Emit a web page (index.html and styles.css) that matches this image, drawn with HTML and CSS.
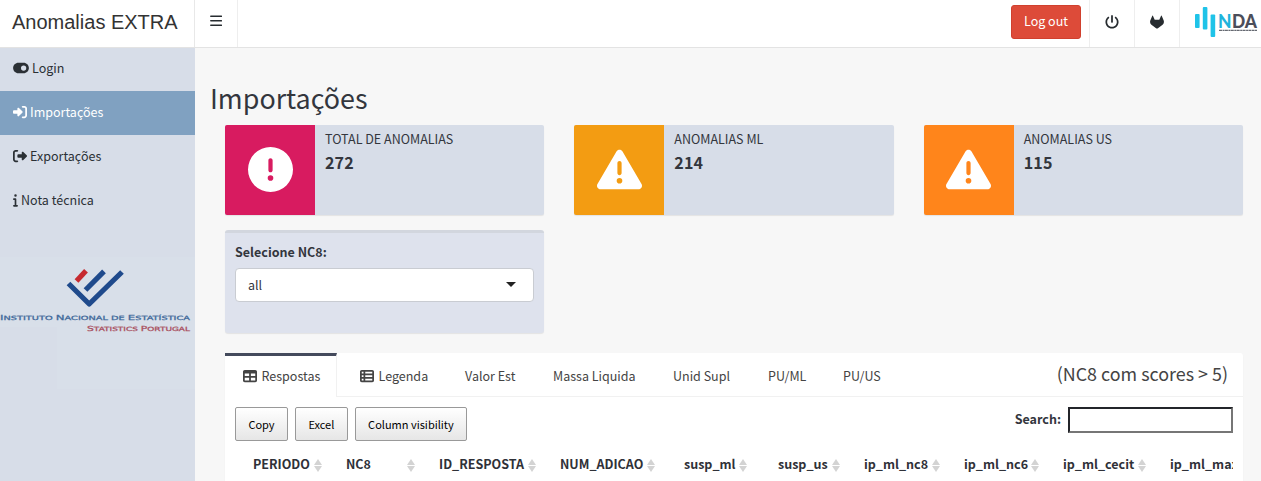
FILE: index.html
```html
<!DOCTYPE html>
<html lang="pt">
<head>
<meta charset="utf-8">
<title>Anomalias EXTRA</title>
<link rel="stylesheet" href="styles.css">
</head>
<body>
<header class="header">
  <div class="brand">Anomalias EXTRA</div>
  <a class="nav-btn menu"><svg width="12" height="12" viewBox="0 0 12 12"><path d="M.8 1.300h10.600M.8 5.800h10.600M.8 10.300h10.600" stroke="currentColor" stroke-width="1.500" stroke-linecap="round"/></svg></a>
  <div class="spacer"></div>
  <button class="logout">Log out</button>
  <a class="nav-btn power"><svg width="14" height="14" viewBox="0 0 512 512"><path fill="currentColor" d="M288 32c0-17.700-14.300-32-32-32s-32 14.300-32 32V256c0 17.700 14.300 32 32 32s32-14.300 32-32V32zM143.500 120.600c13.600-11.300 15.400-31.500 4.100-45.100s-31.500-15.400-45.100-4.100C49.700 115.400 16 181.800 16 256c0 132.500 107.500 240 240 240s240-107.500 240-240c0-74.200-33.800-140.600-86.600-184.600c-13.600-11.300-33.800-9.400-45.100 4.100s-9.400 33.800 4.100 45.100c38.900 32.300 63.500 81 63.500 135.400c0 97.200-78.800 176-176 176s-176-78.800-176-176c0-54.400 24.700-103.100 63.500-135.400z"/></svg></a>
  <a class="nav-btn gitlab"><svg width="14" height="14" viewBox="0 0 14 14"><path fill="currentColor" d="M2.300.7Q2.600.1 2.900.7L4.700 4.700h4.600L11.100.7Q11.400.1 11.700.7L13.700 5.600Q14.500 8 12.600 9.700L7.600 13.400Q7 13.800 6.400 13.400L1.400 9.700Q-.5 8 .3 5.600z"/></svg></a>
  <a class="nda"><svg width="66" height="34" viewBox="0 0 66 34">
    <g fill="#1fc3e8"><rect x="0" y="8" width="4.600" height="14" rx="1"/><rect x="7.800" y="1" width="4.600" height="22.500" rx="1"/><rect x="15.600" y="8.500" width="4.600" height="22.500" rx="1"/></g>
    <g font-family="Lato, sans-serif" font-weight="900" font-size="18"><text x="23" y="21.500" fill="#1fb4dc" textLength="13.500" lengthAdjust="spacingAndGlyphs">N</text><text x="37" y="21.500" fill="#4c4e5a" textLength="25" lengthAdjust="spacingAndGlyphs">DA</text></g>
    <path d="M24 24.300h38" stroke="#666a72" stroke-width="1.300" stroke-dasharray="3 .5 2 .4"/>
  </svg></a>
</header>
<div class="layout">
  <aside class="sidebar">
    <a class="item"><svg width="16" height="14" viewBox="0 0 576 512"><path fill="currentColor" d="M192 64C86 64 0 150 0 256S86 448 192 448H384c106 0 192-86 192-192s-86-192-192-192H192zm192 96a96 96 0 1 1 0 192 96 96 0 1 1 0-192z"/></svg><span>Login</span></a>
    <a class="item active"><svg width="14" height="14" viewBox="0 0 512 512"><path fill="currentColor" d="M217.900 105.900L340.700 228.700c7.200 7.200 11.300 17.100 11.300 27.300s-4.100 20.100-11.300 27.300L217.900 406.100c-6.400 6.400-15 9.900-24 9.900c-18.700 0-33.900-15.200-33.900-33.900l0-62.100L32 320c-17.700 0-32-14.300-32-32l0-64c0-17.700 14.300-32 32-32l128 0 0-62.100c0-18.700 15.200-33.900 33.900-33.900c9 0 17.600 3.600 24 9.900zM352 416l64 0c17.700 0 32-14.300 32-32l0-256c0-17.700-14.300-32-32-32l-64 0c-17.700 0-32-14.300-32-32s14.300-32 32-32l64 0c53 0 96 43 96 96l0 256c0 53-43 96-96 96l-64 0c-17.700 0-32-14.300-32-32s14.300-32 32-32z"/></svg><span>Importações</span></a>
    <a class="item"><svg width="14" height="14" viewBox="0 0 512 512"><path fill="currentColor" d="M377.900 105.900L500.700 228.700c7.200 7.200 11.300 17.100 11.300 27.300s-4.100 20.100-11.300 27.300L377.900 406.100c-6.400 6.400-15 9.900-24 9.900c-18.700 0-33.900-15.200-33.900-33.900l0-62.100-128 0c-17.700 0-32-14.300-32-32l0-64c0-17.700 14.300-32 32-32l128 0 0-62.100c0-18.700 15.200-33.900 33.900-33.900c9 0 17.600 3.600 24 9.900zM160 96L96 96c-17.700 0-32 14.300-32 32l0 256c0 17.700 14.300 32 32 32l64 0c17.700 0 32 14.300 32 32s-14.300 32-32 32l-64 0c-53 0-96-43-96-96L0 128C0 75 43 32 96 32l64 0c17.700 0 32 14.300 32 32s-14.300 32-32 32z"/></svg><span>Exportações</span></a>
    <a class="item"><svg width="5" height="14" viewBox="0 0 192 512"><path fill="currentColor" d="M48 80a48 48 0 1 1 96 0A48 48 0 1 1 48 80zM0 224c0-17.700 14.300-32 32-32H96c17.700 0 32 14.300 32 32V448h32c17.700 0 32 14.300 32 32s-14.300 32-32 32H32c-17.700 0-32-14.300-32-32s14.300-32 32-32H64V256H32c-17.700 0-32-14.300-32-32z"/></svg><span>Nota técnica</span></a>
    <svg class="ine" width="195" height="132" viewBox="0 0 195 132">
      <rect width="195" height="70" fill="#d8dfe9"/><rect x="57" y="70" width="138" height="62" fill="#d8dfe9"/>
      <g fill="none" stroke-width="5.200" stroke-linejoin="round"><path d="M76.500 24L86 13.800" stroke="#c62a30"/><path d="M85.500 33L104 14.300" stroke="#1f4a8c"/><path d="M68.500 26.500L89.200 47L122 15" stroke="#1f4a8c"/></g>
      <g font-family="DejaVu Sans, sans-serif" stroke-width=".25"><g fill="#40699a" stroke="#40699a"><text x="0" y="63" textLength="190" lengthAdjust="spacingAndGlyphs" font-size="5.800"><tspan font-size="7">I</tspan>NSTITUTO <tspan font-size="7">N</tspan>ACIONAL DE <tspan font-size="7">E</tspan>STATÍSTICA</text></g>
      <g fill="#a94f60" stroke="#a94f60"><text x="87" y="73.500" textLength="103" lengthAdjust="spacingAndGlyphs" font-size="5.800"><tspan font-size="7">S</tspan>TATISTICS <tspan font-size="7">P</tspan>ORTUGAL</text></g></g>
    </svg>
  </aside>
  <main class="content">
    <h1>Importações</h1>
    <div class="boxes">
      <section class="info"><div class="tile pink"><svg width="45" height="45" viewBox="0 0 512 512"><path fill="#fff" d="M256 512A256 256 0 1 0 256 0a256 256 0 1 0 0 512zm0-384c13.300 0 24 10.700 24 24V264c0 13.300-10.700 24-24 24s-24-10.700-24-24V152c0-13.300 10.700-24 24-24zM224 352a32 32 0 1 1 64 0 32 32 0 1 1 -64 0z"/></svg></div><div class="info-text"><span>TOTAL DE ANOMALIAS</span><b>272</b></div></section>
      <section class="info"><div class="tile amber"><svg width="45" height="45" viewBox="0 0 512 512"><path fill="#fff" d="M256 32c14.200 0 27.300 7.500 34.500 19.800l216 368c7.300 12.400 7.300 27.700 .2 40.100S486.300 480 472 480H40c-14.300 0-27.600-7.700-34.700-20.100s-7-27.800 .2-40.100l216-368C228.700 39.500 241.800 32 256 32zm0 128c-13.300 0-24 10.700-24 24V296c0 13.300 10.700 24 24 24s24-10.700 24-24V184c0-13.300-10.700-24-24-24zm32 224a32 32 0 1 0 -64 0 32 32 0 1 0 64 0z"/></svg></div><div class="info-text"><span>ANOMALIAS ML</span><b>214</b></div></section>
      <section class="info"><div class="tile orange"><svg width="45" height="45" viewBox="0 0 512 512"><path fill="#fff" d="M256 32c14.200 0 27.300 7.500 34.500 19.800l216 368c7.300 12.400 7.300 27.700 .2 40.100S486.300 480 472 480H40c-14.300 0-27.600-7.700-34.700-20.100s-7-27.800 .2-40.100l216-368C228.700 39.500 241.800 32 256 32zm0 128c-13.300 0-24 10.700-24 24V296c0 13.300 10.700 24 24 24s24-10.700 24-24V184c0-13.300-10.700-24-24-24zm32 224a32 32 0 1 0 -64 0 32 32 0 1 0 64 0z"/></svg></div><div class="info-text"><span>ANOMALIAS US</span><b>115</b></div></section>
    </div>
    <section class="filter">
      <label>Selecione NC8:</label>
      <div class="select"><span>all</span><i class="caret"></i></div>
    </section>
    <section class="panel">
      <nav class="tabs">
        <a class="tab current"><svg width="14" height="14" viewBox="0 0 512 512"><path fill="currentColor" d="M64 256V160H224v96H64zm0 64H224v96H64V320zm224 96V320H448v96H288zM448 256H288V160H448v96zM64 32C28.700 32 0 60.700 0 96V416c0 35.300 28.700 64 64 64H448c35.300 0 64-28.700 64-64V96c0-35.300-28.700-64-64-64H64z"/></svg><span>Respostas</span></a>
        <a class="tab"><svg width="14" height="14" viewBox="0 0 512 512"><path fill="currentColor" d="M0 96C0 60.700 28.700 32 64 32H448c35.300 0 64 28.700 64 64V416c0 35.300-28.700 64-64 64H64c-35.300 0-64-28.700-64-64V96zm64 0v64h64V96H64zm384 0H192v64H448V96zM64 224v64h64V224H64zm384 0H192v64H448V224zM64 352v64h64V352H64zm384 0H192v64H448V352z"/></svg><span>Legenda</span></a>
        <a class="tab">Valor Est</a><a class="tab">Massa Liquida</a><a class="tab">Unid Supl</a><a class="tab">PU/ML</a><a class="tab">PU/US</a>
        <h3>(NC8 com scores &gt; 5)</h3>
      </nav>
      <div class="tools">
        <button>Copy</button><button>Excel</button><button>Column visibility</button>
        <label class="search"><span>Search:</span><input type="text"></label>
      </div>
      <div class="columns">
        <div class="th">PERIODO<i class="sort"></i></div>
        <div class="th">NC8<i class="sort"></i></div>
        <div class="th">ID_RESPOSTA<i class="sort"></i></div>
        <div class="th">NUM_ADICAO<i class="sort"></i></div>
        <div class="th">susp_ml<i class="sort"></i></div>
        <div class="th">susp_us<i class="sort"></i></div>
        <div class="th">ip_ml_nc8<i class="sort"></i></div>
        <div class="th">ip_ml_nc6<i class="sort"></i></div>
        <div class="th">ip_ml_cecit<i class="sort"></i></div>
        <div class="th">ip_ml_max</div>
      </div>
    </section>
  </main>
</div>
</body>
</html>
```
FILE: styles.css
```css
* { box-sizing: border-box; }
body { margin: 0; height: 481px; overflow: hidden; background: #f7f7f7; color: #33363d; font: 12.53px/20px "Noto Sans CJK SC", "Open Sans", sans-serif; }
svg { display: block; flex: none; }
button, input { font: inherit; }
.header { display: flex; height: 48px; background: #fff; border-bottom: 1px solid #e3e3e3; color: #272c30; }
.brand { width: 195px; padding-left: 12px; border-right: 1px solid #e8e8e8; font: 20px/44px "Liberation Sans", Arial, sans-serif; color: #333; white-space: nowrap; }
.nav-btn { display: flex; align-items: center; justify-content: center; width: 45px; padding-bottom: 4px; border-left: 1px solid #eee; }
.menu { width: 43px; padding-bottom: 5px; border-left: 0; border-right: 1px solid #eee; }
.spacer { flex: 1; }
.logout { width: 70px; height: 34px; margin: 5px 8px 0 0; padding: 0 0 2px; border: 1px solid #d0402e; border-radius: 3px; background: #dd4b39; color: #fff; }
.nda { width: 82px; padding: 6px 0 0 15px; border-left: 1px solid #eee; }
.layout { display: flex; height: 433px; }
.sidebar { width: 195px; background: #d7dde8; color: #2b3035; flex: none; }
.item { display: flex; align-items: center; gap: 3px; height: 44px; padding: 0 0 3px 13px; }
.item:first-child { height: 43px; }
.item.active { background: #80a1c1; color: #fff; padding-bottom: 2px; }
.ine { margin-top: 34px; }
.content { flex: 1; min-width: 0; padding: 35px 18px 0 15px; }
h1 { margin: 0; font-size: 26.860px; line-height: 30px; font-weight: 400; height: 42px; }
.boxes { display: grid; grid-template-columns: repeat(3, 1fr); gap: 30px; margin-left: 15px; }
.info { display: flex; height: 90px; background: #d7dde8; border-radius: 2px; box-shadow: 0 1px 1px rgba(0,0,0,.08); overflow: hidden; }
.tile { width: 90px; display: flex; align-items: center; justify-content: center; padding-bottom: 1px; }
.pink { background: #d81b60; }
.amber { background: #f39c12; }
.orange { background: #ff851b; }
.info-text { padding: 4px 10px; display: flex; flex-direction: column; }
.info-text b { font-size: 16.100px; line-height: 27px; letter-spacing: .12px; }
.filter { width: 319px; height: 103px; margin: 15px 0 0 15px; padding: 9px 10px; border-top: 3px solid #d2d6de; border-radius: 3px; background: #dee2ed; box-shadow: 0 1px 1px rgba(0,0,0,.08); }
.filter label { display: block; font-weight: 700; height: 26px; }
.select { display: flex; align-items: center; justify-content: space-between; width: 299px; height: 34px; padding: 0 17px 0 12px; background: #fff; border: 1px solid #c9ccd2; border-radius: 4px; }
.caret { border: 5px solid transparent; border-top-color: #222; border-bottom: 0; margin-bottom: 2px; }
.panel { margin: 20px 0 0 15px; height: 140px; background: #fff; border-radius: 3px; box-shadow: 0 1px 1px rgba(0,0,0,.08); }
.tabs { display: flex; height: 44px; border-bottom: 1px solid #f1f1f1; color: #444; white-space: nowrap; }
.tab { display: flex; align-items: center; gap: 4.500px; height: 44px; padding: 2px 0 0 15px; width: 88px; }
.tab.current { width: 112px; padding: 0 0 1px 18px; margin-right: 8px; border-top: 3px solid #444a5c; border-right: 1px solid #f1f1f1; background: #fff; }
.tab:nth-child(2) { width: 105px; }
.tab:nth-child(4) { width: 120px; }
.tab:nth-child(5) { width: 95px; }
.tab:nth-child(6) { width: 75px; }
.tab:nth-child(7) { width: 70px; }
h3 { margin: 0 15px 0 auto; font-size: 17.900px; font-weight: 400; line-height: 41px; }
.tools { display: flex; align-items: flex-start; gap: 7px; padding: 10px; height: 54px; }
.tools button { height: 34px; padding: 0 12.400px 1px; border: 1px solid #999; border-radius: 2px; background: linear-gradient(#fff, #e6e6e6); color: #000; font-size: 11px; white-space: nowrap; }
.search { display: flex; align-items: center; gap: 7px; margin-left: auto; font-weight: 700; }
.search span { padding-bottom: 2px; }
.search input { width: 165px; height: 26px; border: 2px solid; background: #fff; border-color: #23252a #767676 #767676 #23252a; }
.columns { display: grid; grid-template-columns: 93px 93px 121px 124px 94px 86px 100px 99px 107px 63px; margin: 0 10px 0 28px; height: 26px; align-items: center; overflow: hidden; font-weight: 700; color: #2f3138; }
.th { display: flex; justify-content: space-between; align-items: center; padding-right: 24px; white-space: nowrap; }
.th:nth-child(4) { padding-right: 29px; }
.th:nth-child(5) { padding-right: 31px; }
.th:last-child { padding: 0; }
.sort { display: flex; flex-direction: column; gap: 1px; margin-top: 2px; }
.sort::before, .sort::after { content: ""; border: 4px solid transparent; }
.sort::before { border-top: 0; border-bottom: 6.500px solid #d3d3d3; }
.sort::after { border-bottom: 0; border-top: 6.500px solid #d3d3d3; }
```
